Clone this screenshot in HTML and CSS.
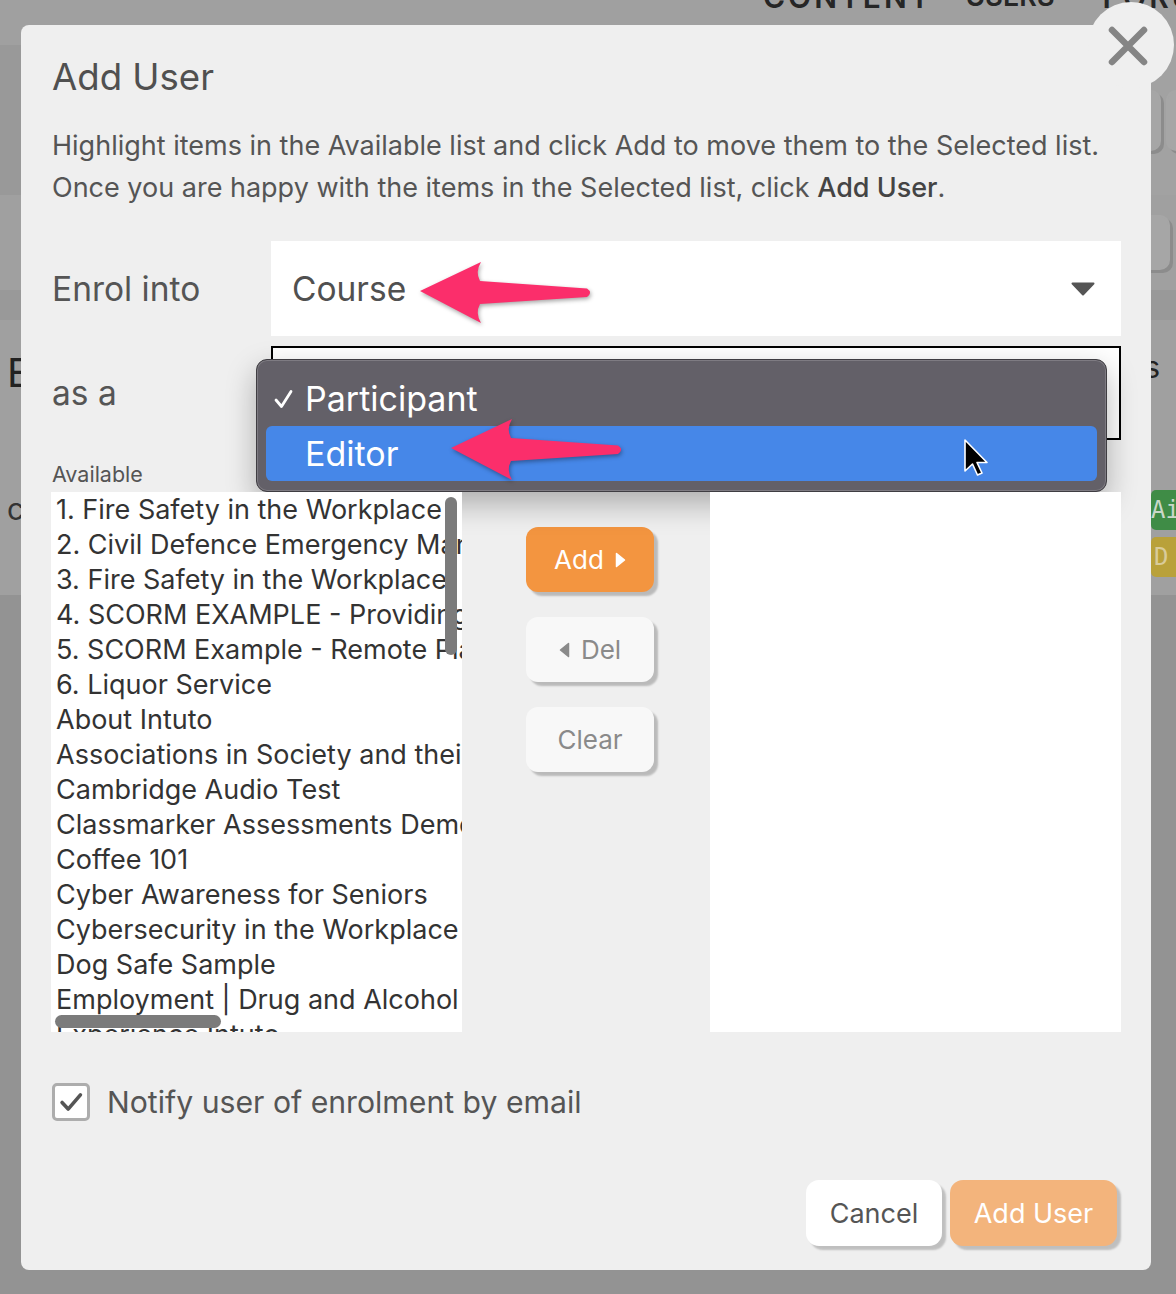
FILE: index.html
```html
<!DOCTYPE html>
<html lang="en">
<head>
<meta charset="utf-8">
<title>Add User</title>
<link rel="stylesheet" href="styles.css">
</head>
<body>
<div class="page">
  <header class="topnav">
    <span class="nav-content">CONTENT</span><span class="nav-users">USERS</span><span class="nav-forums">FORUMS</span>
  </header>
  <div class="band band-a"><span class="bg-btn one"></span><span class="bg-btn two"></span></div>
  <div class="band band-b"><span class="bg-btn three"></span></div>
  <div class="band band-c"></div>
  <div class="band band-d"><span class="bg-heading">E</span><span class="bg-right">s</span></div>
  <div class="band band-e"><span class="bg-small">c</span><span class="badges"><span class="badge green">Aim</span><span class="badge yellow">D</span></span></div>
  <div class="band band-f"></div>
</div>

<div class="overlay">
  <div class="modal">
    <button class="close" aria-label="Close">
      <svg width="40" height="40" viewBox="0 0 40 40"><path d="M4 4 L36 36 M36 4 L4 36" stroke="#858585" stroke-width="6.5" stroke-linecap="round"/></svg>
    </button>

    <h1 class="title">Add User</h1>
    <p class="desc">Highlight items in the Available list and click Add to move them to the Selected list.<br>Once you are happy with the items in the Selected list, click <strong>Add User</strong>.</p>

    <div class="field-row">
      <div class="field-label">Enrol into</div>
      <div class="select course">
        <span>Course</span>
        <svg class="caret" width="24" height="14" viewBox="0 0 24 14"><path d="M1.5 1.5 H22.5 L12 12.5 Z" fill="#555" stroke="#555" stroke-width="2" stroke-linejoin="round"/></svg>
      </div>
    </div>

    <div class="field-row second">
      <div class="field-label">as a</div>
      <div class="select role">
        <div class="popup">
          <div class="opt checked"><span class="tick"><svg width="19" height="20" viewBox="0 0 19 20"><path d="M2 11 L7.5 17.5 L17 2.5" fill="none" stroke="#fff" stroke-width="2.8" stroke-linecap="round" stroke-linejoin="round"/></svg></span>Participant</div>
          <div class="opt active">Editor</div>
        </div>
      </div>
    </div>

    <div class="lists">
      <div class="list-label">Available</div>
      <div class="list-label"></div>
      <div class="list-label"></div>
      <div class="list available">
        <ul>
          <li>1. Fire Safety in the Workplace</li>
          <li>2. Civil Defence Emergency Management</li>
          <li>3. Fire Safety in the Workplace</li>
          <li>4. SCORM EXAMPLE - Providing Service</li>
          <li>5. SCORM Example - Remote Play</li>
          <li>6. Liquor Service</li>
          <li>About Intuto</li>
          <li>Associations in Society and their Role</li>
          <li>Cambridge Audio Test</li>
          <li>Classmarker Assessments Demo</li>
          <li>Coffee 101</li>
          <li>Cyber Awareness for Seniors</li>
          <li>Cybersecurity in the Workplace</li>
          <li>Dog Safe Sample</li>
          <li>Employment | Drug and Alcohol</li>
          <li>Experience Intuto</li>
        </ul>
        <span class="vscroll"></span>
        <span class="hscroll"></span>
      </div>
      <div class="mid">
        <button class="btn btn-add"><span>Add</span><svg width="11" height="16" viewBox="0 0 11 16"><path d="M1.5 1.5 L9.5 8 L1.5 14.5 Z" fill="#fff" stroke="#fff" stroke-width="1.5" stroke-linejoin="round"/></svg></button>
        <button class="btn btn-light"><svg width="11" height="16" viewBox="0 0 11 16"><path d="M9.5 1.5 L1.5 8 L9.5 14.5 Z" fill="#8a8a8a" stroke="#8a8a8a" stroke-width="1.5" stroke-linejoin="round"/></svg><span>Del</span></button>
        <button class="btn btn-light">Clear</button>
      </div>
      <div class="list selected"></div>
    </div>

    <label class="notify">
      <span class="checkbox"><svg width="34" height="34" viewBox="0 0 34 34"><path d="M7.5 17.5 L14 24.5 L27 9.5" fill="none" stroke="#555" stroke-width="3.8" stroke-linecap="round" stroke-linejoin="round"/></svg></span>
      Notify user of enrolment by email
    </label>

    <div class="footer">
      <button class="fbtn cancel">Cancel</button>
      <button class="fbtn adduser">Add User</button>
    </div>
  </div>
</div>

<svg class="annot" width="1176" height="1294" viewBox="0 0 1176 1294">
  <defs>
    <path id="arrow" d="M420 291 L481 262 Q475 272 480 281 L587 288.5 Q593 292.5 587 297 L480 304 Q475 313 481 323 Z"/>
  </defs>
  <g class="arrows">
    <use href="#arrow"/>
    <use href="#arrow" transform="translate(31 157)"/>
  </g>
  <path class="cursor" d="M965 440 V471 L972.5 464 L977.5 475 L982 473 L977 462.5 L987 462.5 Z" fill="#000" stroke="#fff" stroke-width="1.6" stroke-linejoin="round"/>
</svg>
</body>
</html>
```

FILE: styles.css
```css
* { box-sizing: border-box; }
html, body { margin: 0; padding: 0; }
body {
  width: 1176px;
  height: 1294px;
  overflow: hidden;
  position: relative;
  background: #939393;
  font-family: Inter, "Noto Sans", sans-serif;
}

/* dimmed page behind the dialog */
.page { display: flex; flex-direction: column; }
.topnav {
  height: 45px;
  background: #a0a0a0;
  display: flex;
  padding-left: 763px;
  gap: 33px;
  font-size: 30px;
  font-weight: 600;
  letter-spacing: 3px;
  color: #262626;
  line-height: 0;
  white-space: nowrap;
}
.topnav span { margin-top: -3px; display: block; height: 0; }
.topnav .nav-users { letter-spacing: 0; font-size: 27px; }
.topnav .nav-forums { margin-left: 15px; }
.band { background: #a0a0a0; display: flex; justify-content: space-between; align-items: center; }
.band-a { height: 150px; background: linear-gradient(to right, #999 0 30px, #a2a2a2 30px); justify-content: flex-end; gap: 5px; }
.band-b { height: 95px; justify-content: flex-end; }
.band-c { height: 30px; background: #999; }
.band-d { height: 105px; font-size: 40px; color: #222; padding: 0 0 0 7px; }
.band-e { height: 170px; background: #a0a0a0; font-size: 30px; color: #333; padding-left: 7px; }
.band-f { flex: 1; background: #939393; height: 700px; }
.bg-btn { display: block; height: 61px; border-radius: 10px; background: #a6a6a6; border: 2px solid #a6a6a6; box-shadow: 3px 3px 0 #8c8c8c; }
.bg-btn.one { width: 80px; }
.bg-btn.two { width: 40px; margin-right: -30px; }
.bg-btn.three { width: 80px; height: 55px; margin-right: 6px; }
.bg-right { margin-right: 16px; font-size: 30px; color: #222; padding-bottom: 12px; }
.bg-small { align-self: flex-start; padding-top: 66px; }
.badges { display: flex; flex-direction: column; gap: 7px; margin-right: -35px; align-self: flex-start; padding-top: 65px; }
.badge { display: block; width: 60px; height: 40px; border-radius: 5px; font-family: "DejaVu Sans Mono", monospace; font-size: 24px; color: #c9d8c9; padding: 5px 0 0 0; line-height: 30px; }
.badge.green { background: #3f8c46; }
.badge.yellow { background: #b9a13a; color: #d9cc9a; padding-left: 3px; }

/* dialog */
.overlay { position: absolute; inset: 0; }
.modal {
  position: absolute;
  left: 21px;
  top: 25px;
  width: 1130px;
  height: 1245px;
  background: #efefef;
  border-radius: 8px;
  padding: 30px 30px 24px 30px;
  color: #555;
}
.close {
  position: absolute;
  left: 1067px;
  top: -23px;
  width: 86px;
  height: 86px;
  border-radius: 50%;
  border: 0;
  background: #efefef;
  padding: 0;
  display: flex;
  align-items: center;
  justify-content: center;
}
.close svg { margin-left: -6px; margin-top: 2px; }

.title {
  margin: 0 0 0 1px;
  font-size: 36.6px;
  line-height: 44px;
  font-weight: 400;
  color: #505050;
}
.desc {
  margin: 26px 0 0 1px;
  font-size: 27px;
  line-height: 42px;
  white-space: nowrap;
  color: #555;
}
.desc strong { font-weight: 500; color: #444; }

.field-row { display: flex; margin-top: 32px; height: 95px; align-items: center; }
.field-row.second { margin-top: 10px; height: 94px; }
.field-label { width: 220px; font-size: 33.5px; color: #555; padding-left: 1px; }
.select {
  width: 850px;
  height: 100%;
  background: #fff;
  position: relative;
  display: flex;
  align-items: center;
  font-size: 33.5px;
  color: #505050;
}
.select.course { padding: 0 26px 0 21px; justify-content: space-between; }
.select.role { border: 2px solid #000; }

.popup {
  position: absolute;
  left: -17px;
  top: 11px;
  width: 851px;
  height: 133px;
  background: #636068;
  border: 1px solid #3f3d42;
  box-shadow: inset 0 0 0 1px #7e7b82, 0 12px 30px rgba(0,0,0,0.28);
  border-radius: 11px;
  padding: 10px 9px 9px 9px;
  color: #fff;
  font-size: 34px;
}
.opt { height: 56px; display: flex; align-items: center; padding-left: 39px; border-radius: 6px; }
.opt.checked { padding-left: 8px; }
.opt.active { height: 55px; background: #4687e8; }
.tick { width: 31px; display: flex; align-items: center; padding-top: 2px; }

.lists {
  margin-top: 22px;
  display: grid;
  grid-template-columns: 411px 248px 411px;
  grid-template-rows: 24px 540px;
  row-gap: 6px;
}
.list-label { font-size: 21.5px; line-height: 24px; color: #555; padding-left: 1px; }
.list { background: #fff; position: relative; overflow: hidden; }
.list ul { list-style: none; margin: 0; padding: 0 0 0 5px; }
.list li { font-size: 27px; line-height: 35px; color: #333; white-space: nowrap; }
.vscroll { position: absolute; left: 394px; top: 5px; width: 12px; height: 158px; border-radius: 6px; background: #7b7b7b; }
.hscroll { position: absolute; left: 4px; top: 523px; width: 166px; height: 13px; border-radius: 7px; background: #7b7b7b; }

.mid { display: flex; flex-direction: column; gap: 25px; padding: 35px 0 0 64px; }
.btn {
  width: 128px;
  height: 65px;
  border: 0;
  border-radius: 12px;
  font-family: inherit;
  font-size: 26px;
  display: flex;
  align-items: center;
  justify-content: center;
  gap: 11px;
  box-shadow: 4px 4px 2px rgba(0,0,0,0.22);
}
.btn svg { flex-shrink: 0; }
.btn-add { background: #f39540; color: #fff; padding-left: 6px; }
.btn-light { background: #f8f8f8; color: #8a8a8a; }

.notify {
  margin-top: 51px;
  height: 38px;
  display: flex;
  align-items: center;
  gap: 17px;
  font-size: 30.2px;
  color: #555;
  padding-left: 1px;
}
.checkbox {
  width: 38px;
  height: 38px;
  border: 3px solid #adadad;
  border-radius: 5px;
  background: #fff;
  display: flex;
  align-items: center;
  justify-content: center;
}

.footer { margin-top: 59px; display: flex; justify-content: flex-end; gap: 8px; padding-right: 4px; }
.fbtn {
  height: 66px;
  border: 0;
  border-radius: 13px;
  font-family: inherit;
  font-size: 27px;
  box-shadow: 4px 4px 2px rgba(0,0,0,0.2);
}
.fbtn.cancel { width: 136px; background: #fff; color: #555; }
.fbtn.adduser { width: 167px; background: #f3b47c; color: #fff; }

.annot { position: absolute; left: 0; top: 0; pointer-events: none; z-index: 5; }
.arrows { fill: #fb2e6b; filter: drop-shadow(1px 2px 2px rgba(0,0,0,0.35)); }
```
